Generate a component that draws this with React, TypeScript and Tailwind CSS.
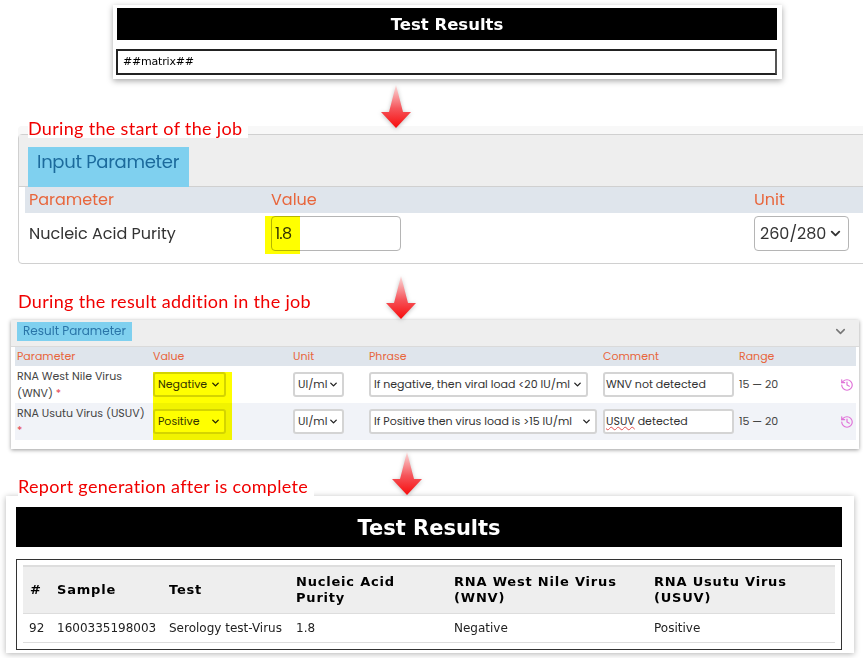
import { ChevronDown, History } from 'lucide-react';

const dejavu = "font-['DejaVu_Sans',sans-serif]";
const app = "font-['Poppins','Lato',sans-serif]";
const note = "font-['Lato',sans-serif]";

function DownArrow({ id, className }: { id: string; className: string }) {
  return (
    <svg
      viewBox="0 0 30 44"
      className={`absolute z-20 w-[30px] h-[44px] drop-shadow-[0_1px_2px_rgba(0,0,0,0.25)] ${className}`}
    >
      <defs>
        <linearGradient id={id} x1="0" y1="0" x2="0" y2="1">
          <stop offset="0" stopColor="#fbdcdc" />
          <stop offset="0.55" stopColor="#f5545a" />
          <stop offset="1" stopColor="#f80c0c" />
        </linearGradient>
      </defs>
      <path d="M15 0 L22 27 L30 27 L15 43 L0 27 L8 27 Z" fill={`url(#${id})`} />
    </svg>
  );
}

function Note({ children, className }: { children: string; className: string }) {
  return (
    <div
      className={`${note} relative z-10 w-fit bg-white text-[18px] leading-[20px] text-[#f00000] tracking-[0.32px] ${className}`}
    >
      {children}
    </div>
  );
}

function FakeSelect({ label, className }: { label: string; className: string }) {
  return (
    <div
      className={`flex items-center justify-between rounded-[3px] border-2 border-[#d4d4d4] bg-white px-[3px] h-[25px] text-[#333] ${className}`}
    >
      <span className="whitespace-nowrap">{label}</span>
      <ChevronDown size={11} strokeWidth={3} className="shrink-0 text-[#222]" />
    </div>
  );
}

function ResultRow({
  name,
  value,
  phrase,
  phraseWidth,
  comment,
  shaded,
}: {
  name: React.ReactNode;
  value: string;
  phrase: string;
  phraseWidth: string;
  comment: React.ReactNode;
  shaded?: boolean;
}) {
  return (
    <div
      className={`grid grid-cols-[136px_140px_76px_234px_136px_1fr_16px] items-center h-[37px] pl-[2px] ${shaded ? 'bg-[#f1f3f8]' : 'bg-white'}`}
    >
      <div className="leading-[17px] text-[#444] pr-1">{name}</div>
      <FakeSelect label={value} className="w-[73px]" />
      <FakeSelect label="UI/ml" className="w-[51px]" />
      <FakeSelect label={phrase} className={phraseWidth} />
      <div className="w-[131px] h-[25px] rounded-[3px] border-2 border-[#d4d4d4] bg-white px-[1px] leading-[20px] text-[#333]">
        {comment}
      </div>
      <div className="text-[#444]">15 — 20</div>
      <History size={14} className="text-[#e070d8]" />
    </div>
  );
}

export default function App() {
  return (
    <div className="relative w-[863px] h-[658px] overflow-hidden bg-white">
      <DownArrow id="arrow-a" className="left-[381px] top-[85px]" />
      <DownArrow id="arrow-b" className="left-[386px] top-[276px]" />
      <DownArrow id="arrow-c" className="left-[392px] top-[452px]" />

      {/* Template */}
      <div className={`${dejavu} ml-[113px] mt-[5px] w-[669px] h-[74px] bg-white pl-[3px] pr-[5px] pt-[3px] shadow-[0_2px_6px_rgba(0,0,0,0.35)]`}>
        <div className="ml-[1px] h-[32px] bg-black text-center text-[16.5px] font-bold leading-[34px] text-white">
          Test Results
        </div>
        <div className="mt-[9px] h-[26px] border-2 border-[#222] border-r-[#555] pl-[5px] text-[11px] leading-[22px] tracking-[-0.2px] text-black">
          ##matrix##
        </div>
      </div>

      <Note className="ml-[28px] mt-[39px] pr-[6px] mb-[-4px]">During the start of the job</Note>

      {/* Input parameter */}
      <div className={`${app} ml-[18px] w-[860px] h-[130px] rounded-[4px] border border-[#d0d0d0] bg-white shadow-[0_-8px_0_#f8f8f8]`}>
        <div className="h-[52px] bg-[#eeeeee] border-b border-[#d0d0d0] pl-[9px] pt-[12px]">
          <div className="w-[161px] h-[40px] bg-[#7fd0ef] pl-[9px] text-[18px] leading-[30px] tracking-[-0.3px] text-[#1c6a9c]">
            Input Parameter
          </div>
        </div>
        <div className="ml-[6px] grid grid-cols-[242px_483px_1fr] items-center h-[26px] bg-[#dfe5ec] pl-[4px] text-[16px] text-[#e8663c]">
          <span>Parameter</span>
          <span>Value</span>
          <span>Unit</span>
        </div>
        <div className="ml-[6px] grid grid-cols-[242px_483px_1fr] items-center pl-[4px] pt-[3px] text-[16px] text-[#333]">
          <span>Nucleic Acid Purity</span>
          <div className="relative w-[130px] h-[35px] rounded-[4px] border border-[#b5b5b5] pl-[3px] leading-[33px] tracking-[-0.8px]">
            <span className="absolute left-[-7px] top-[-1px] h-[38px] w-[35px] bg-[#ffff00] mix-blend-multiply" />
            1.8
          </div>
          <div className="flex items-center justify-between w-[95px] h-[35px] rounded-[4px] border border-[#b5b5b5] px-[5px]">
            <span>260/280</span>
            <ChevronDown size={15} strokeWidth={3} />
          </div>
        </div>
      </div>

      <Note className="ml-[18px] mt-[27px] pr-[6px]">During the result addition in the job</Note>

      {/* Result parameter */}
      <div className={`${app} ml-[11px] mt-[9px] w-[848px] h-[129px] bg-white text-[11px] shadow-[0_1px_4px_rgba(0,0,0,0.4)]`}>
        <div className="flex items-start justify-between h-[27px] bg-[#eeeeee] border-b border-[#dadada] pl-[6px] pr-[11px] pt-[2px]">
          <div className="w-[115px] h-[19px] bg-[#7fd0ef] pl-[6px] text-[12px] leading-[17px] text-[#2a75a8]">
            Result Parameter
          </div>
          <ChevronDown size={15} strokeWidth={2.5} className="mt-[2px] text-[#777]" />
        </div>
        <div className="relative ml-[4px] mr-[3px]">
          <div className="grid grid-cols-[136px_140px_76px_234px_136px_1fr_16px] items-center h-[19px] pl-[2px] bg-[#dfe5ec] text-[#e8663c]">
            <span>Parameter</span>
            <span>Value</span>
            <span>Unit</span>
            <span>Phrase</span>
            <span>Comment</span>
            <span>Range</span>
          </div>
          <ResultRow
            name={<>RNA West Nile Virus (WNV) <span className="text-[#e53e4d]">*</span></>}
            value="Negative"
            phrase="If negative, then viral load <20 IU/ml"
            phraseWidth="w-[219px]"
            comment="WNV not detected"
          />
          <ResultRow
            shaded
            name={<>RNA Usutu Virus (USUV) <span className="text-[#e53e4d]">*</span></>}
            value="Positive"
            phrase="If Positive then virus load is >15 IU/ml"
            phraseWidth="w-[228px]"
            comment={<><span className="underline decoration-wavy decoration-[#e05050] decoration-1">USUV</span> detected</>}
          />
          {/* Highlight over the two value selects */}
          <span className="absolute left-[138px] top-[25px] h-[68px] w-[79px] bg-[#ffff00] mix-blend-multiply" />
        </div>
      </div>

      <Note className="ml-[18px] mt-[27px] pr-[6px]">Report generation after is complete</Note>

      {/* Finished report */}
      <div className={`${dejavu} ml-[6px] w-[848px] h-[157px] bg-white pl-[10px] pr-[12px] pt-[11px] shadow-[0_1px_6px_rgba(0,0,0,0.3)]`}>
        <div className="h-[40px] bg-black text-center text-[21px] font-bold leading-[42px] text-white">
          Test Results
        </div>
        <div className="mt-[12px] h-[91px] border border-[#333] px-[6px] pt-[5px]">
          <table className="w-full table-fixed border-collapse text-[12px] text-[#222]">
            <colgroup>
              <col className="w-[34px]" />
              <col className="w-[112px]" />
              <col className="w-[127px]" />
              <col className="w-[158px]" />
              <col className="w-[200px]" />
              <col />
            </colgroup>
            <thead>
              <tr className="h-[47px] border-t-2 border-b border-[#dddddd] bg-[#eeeeee] text-left text-[13px] font-bold leading-[16px] tracking-[0.8px] text-black">
                <th className="pl-[7px]">#</th>
                <th>Sample</th>
                <th>Test</th>
                <th>Nucleic Acid<br />Purity</th>
                <th>RNA West Nile Virus<br />(WNV)</th>
                <th>RNA Usutu Virus<br />(USUV)</th>
              </tr>
            </thead>
            <tbody>
              <tr className="h-[29px] border-b border-[#dddddd]">
                <td className="pl-[6px]">92</td>
                <td>1600335198003</td>
                <td>Serology test-Virus</td>
                <td>1.8</td>
                <td>Negative</td>
                <td>Positive</td>
              </tr>
            </tbody>
          </table>
        </div>
      </div>
    </div>
  );
}
